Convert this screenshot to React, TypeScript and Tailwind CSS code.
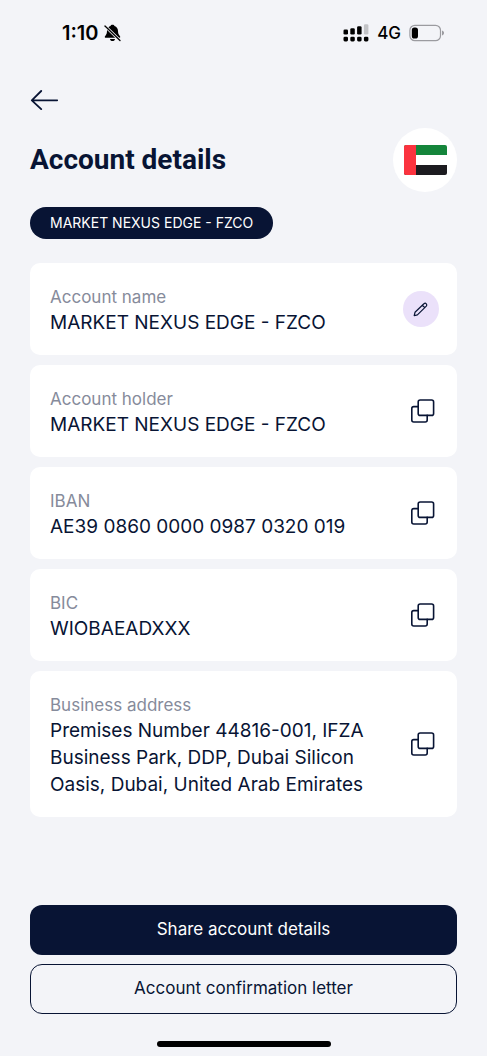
import { ReactNode, useState } from "react";

interface Detail {
  id: string;
  label: string;
  value: string;
  action: "edit" | "copy";
}

const companyName = "MARKET NEXUS EDGE - FZCO";

const details: Detail[] = [
  { id: "name", label: "Account name", value: companyName, action: "edit" },
  { id: "holder", label: "Account holder", value: companyName, action: "copy" },
  {
    id: "iban",
    label: "IBAN",
    value: "AE39 0860 0000 0987 0320 019",
    action: "copy",
  },
  { id: "bic", label: "BIC", value: "WIOBAEADXXX", action: "copy" },
  {
    id: "address",
    label: "Business address",
    value:
      "Premises Number 44816-001, IFZA Business Park, DDP, Dubai Silicon Oasis, Dubai, United Arab Emirates",
    action: "copy",
  },
];

const BellOffIcon = () => (
  <svg className="h-[18px] w-[17px]" viewBox="0 0 17 18" aria-hidden="true">
    <path
      fill="currentColor"
      d="M8.5.8c1 0 1.8.5 2 1.3 2.3.8 3.4 2.700 3.500 5 .1 2.400.5 3.200 1.400 4.300.6.7 1 1.100.8 1.800-.2.500-.6.6-1.200.6H2c-.6 0-1-.1-1.200-.6-.2-.7.2-1.100.8-1.800.9-1.100 1.300-1.900 1.400-4.300.1-2.300 1.200-4.200 3.500-5C6.700 1.300 7.500.8 8.500.8zM6 14.900h5c-.2 1.300-1.100 2.200-2.500 2.200S6.200 16.200 6 14.900z"
    />
    <path stroke="#f3f4f8" strokeWidth="3" d="M.8 1.800l15.400 14.900" />
    <path
      stroke="currentColor"
      strokeWidth="1.3"
      strokeLinecap="round"
      d="M1 2l15 14.500"
    />
  </svg>
);

const SignalIcon = () => (
  <svg className="h-[18px] w-[26px]" viewBox="0 0 26 18" aria-hidden="true">
    <g fill="currentColor">
      <rect x="0.5" y="5.5" width="4.5" height="5" rx="1.3" />
      <rect x="7.3" y="4.2" width="4.5" height="6.3" rx="1.3" />
      <rect x="14.1" y="2.2" width="4.5" height="8.3" rx="1.3" />
      <rect x="20.9" y="0.2" width="4.5" height="10.3" rx="1.3" opacity="0.2" />
      <rect x="0.5" y="12.7" width="4.5" height="4.7" rx="1.4" />
      <rect x="7.3" y="12.7" width="4.5" height="4.7" rx="1.4" />
      <rect x="14.1" y="12.7" width="4.5" height="4.7" rx="1.4" />
      <rect x="20.9" y="12.7" width="4.5" height="4.7" rx="1.4" />
    </g>
  </svg>
);

const BatteryIcon = () => (
  <svg className="h-[18px] w-[36px]" viewBox="0 0 36 18" aria-hidden="true">
    <rect
      x="0.9"
      y="1.3"
      width="30.6"
      height="15.4"
      rx="5"
      fill="none"
      stroke="#9b9ba0"
      strokeWidth="1.2"
    />
    <path fill="#9b9ba0" d="M33 6.6c1.3.4 2 1.3 2 2.4s-.7 2-2 2.4z" />
    <rect x="2.8" y="3.4" width="6.2" height="11.2" rx="2.6" fill="#000" />
  </svg>
);

const ArrowLeftIcon = () => (
  <svg
    className="h-5 w-7"
    viewBox="0 0 28 20"
    fill="none"
    stroke="currentColor"
    strokeWidth="1.8"
    strokeLinecap="round"
    strokeLinejoin="round"
    aria-hidden="true"
  >
    <path d="M11.2 1L1.8 10.3l9.400 8.900M1.800 10.300h25.400" />
  </svg>
);

const PencilIcon = () => (
  <svg
    className="h-9 w-9"
    viewBox="0 0 36 36"
    fill="none"
    stroke="currentColor"
    strokeWidth="1.2"
    strokeLinecap="round"
    strokeLinejoin="round"
    aria-hidden="true"
  >
    <path d="M11.200 24.600l.8-3.300L20.900 12.800c.7-.7 1.700-.7 2.400 0s.6 1.600 0 2.300L14.400 23.900zM19.400 14.300l2.400 2.300" />
  </svg>
);

const CopyIcon = () => (
  <svg
    className="h-9 w-9"
    viewBox="0 0 36 36"
    fill="none"
    stroke="currentColor"
    strokeWidth="1.6"
    strokeLinecap="round"
    strokeLinejoin="round"
    aria-hidden="true"
  >
    <rect x="15.2" y="7" width="15.4" height="15.4" rx="2" />
    <path d="M15.2 13.600h-4.400a2 2 0 0 0-2 2v11.400a2 2 0 0 0 2 2h11.400a2 2 0 0 0 2-2v-4.600" />
  </svg>
);

const FlagUae = () => (
  <svg
    className="h-[30px] w-[43px] rounded-[2px]"
    viewBox="0 0 43 30"
    role="img"
    aria-label="United Arab Emirates"
  >
    <rect width="43" height="30" fill="#fff" />
    <rect width="43" height="10" fill="#14853b" />
    <rect y="20" width="43" height="10" fill="#1c1b20" />
    <rect width="12" height="30" fill="#fb333f" />
  </svg>
);

const StatusBar = () => (
  <div className="flex h-[66px] items-center justify-between pr-[42px] pl-[62px] text-black">
    <div className="flex items-center gap-[6px]">
      <span className="text-[20px] leading-6 font-semibold">1:10</span>
      <BellOffIcon />
    </div>
    <div className="flex items-center gap-2">
      <SignalIcon />
      <span className="text-[17px] leading-6 font-medium">4G</span>
      <BatteryIcon />
    </div>
  </div>
);

interface IconButtonProps {
  title: string;
  className?: string;
  onClick?: () => void;
  children: ReactNode;
}

const IconButton = ({ title, className = "", onClick, children }: IconButtonProps) => (
  <button
    type="button"
    aria-label={title}
    onClick={onClick}
    className={`h-9 w-9 shrink-0 rounded-full ${className}`}
  >
    {children}
  </button>
);

const DetailCard = ({ label, value, action }: Detail) => {
  const handleCopy = () => {
    navigator.clipboard?.writeText(value);
  };

  return (
    <div className="flex items-center justify-between gap-4 rounded-[10px] bg-white py-[19px] pr-[18px] pl-5">
      <dl className="pt-[3px]">
        <dt className="text-[17px] leading-6 text-[#868b9b]">{label}</dt>
        <dd className="text-[19px] leading-[27px]">{value}</dd>
      </dl>
      {action === "edit" ? (
        <IconButton title={`Edit ${label}`} className="bg-[#ebe1fa]">
          <PencilIcon />
        </IconButton>
      ) : (
        <IconButton title={`Copy ${label}`} onClick={handleCopy}>
          <CopyIcon />
        </IconButton>
      )}
    </div>
  );
};

const App = () => {
  const [items] = useState(details);

  return (
    <div className="flex min-h-screen flex-col bg-[#f3f4f8] font-[Inter,sans-serif] text-[#081434]">
      <StatusBar />

      <main className="flex-1 px-[30px] pt-6">
        <button type="button" aria-label="Back" className="block">
          <ArrowLeftIcon />
        </button>

        <div className="mt-[18px] flex items-center justify-between">
          <h1 className="font-[Roboto,sans-serif] text-[28px] leading-9 font-bold">
            Account details
          </h1>
          <div className="flex h-16 w-16 items-center justify-center rounded-full bg-white">
            <FlagUae />
          </div>
        </div>

        <p className="mt-[15px] w-fit rounded-full bg-[#081434] px-5 text-[14px] leading-8 text-white">
          {companyName}
        </p>

        <div className="mt-6 flex flex-col gap-[10px]">
          {items.map((item) => (
            <DetailCard key={item.id} {...item} />
          ))}
        </div>
      </main>

      <footer className="flex flex-col items-center px-[30px] pt-6 pb-[9px] text-[17px]">
        <button
          type="button"
          className="h-[50px] w-full rounded-[12px] bg-[#081434] text-white"
        >
          Share account details
        </button>
        <button
          type="button"
          className="mt-[9px] h-[50px] w-full rounded-[12px] border border-[#081434]"
        >
          Account confirmation letter
        </button>
        <div className="mt-[27px] h-[6px] w-[174px] rounded-full bg-black" />
      </footer>
    </div>
  );
};

export default App;
